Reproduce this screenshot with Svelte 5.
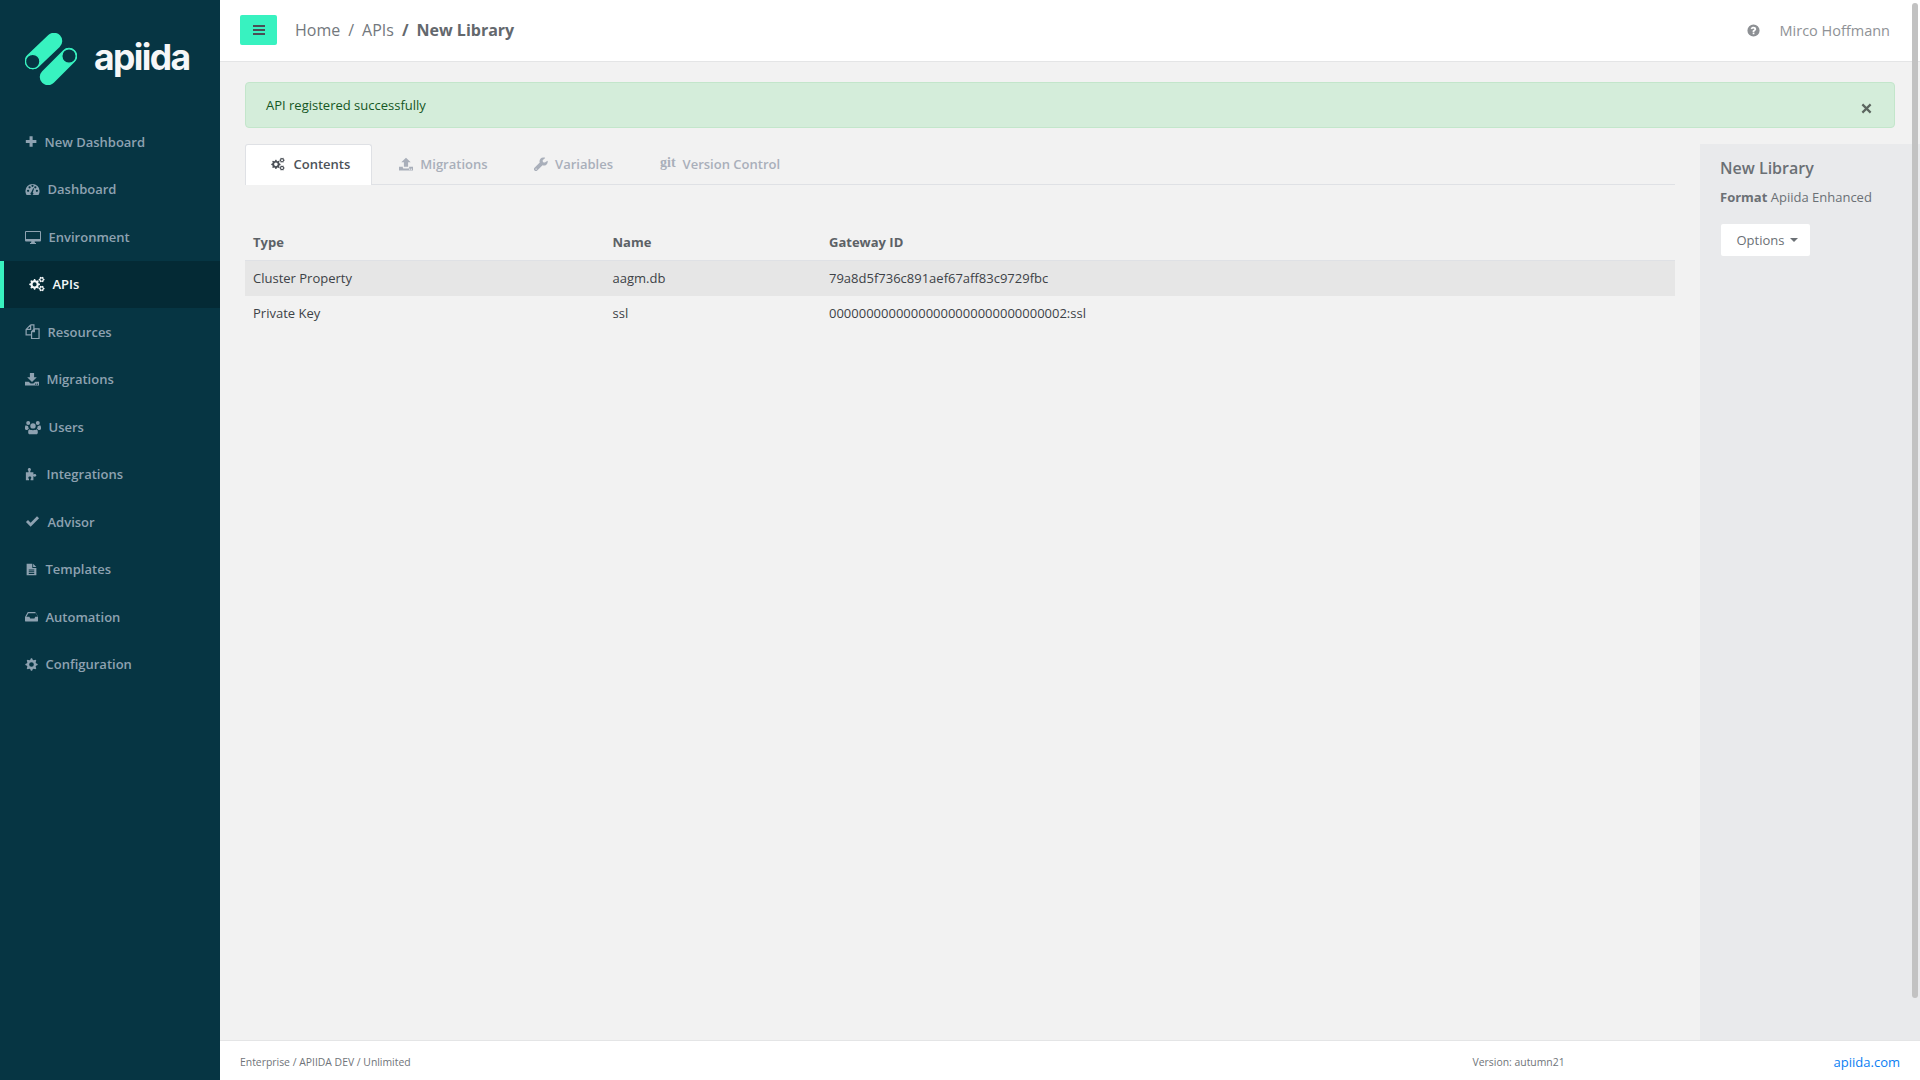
<script>
  function gear(cx, cy, r, teeth = 8) {
    const pts = [];
    const n = teeth * 4;
    for (let i = 0; i < n; i++) {
      const a = ((i - 0.5) / n) * Math.PI * 2;
      const rr = i % 4 === 0 || i % 4 === 1 ? r : r * 0.76;
      pts.push((cx + Math.cos(a) * rr).toFixed(2) + ' ' + (cy + Math.sin(a) * rr).toFixed(2));
    }
    const h = r * 0.38;
    return `M${pts.join('L')}Z M${cx - h} ${cy}a${h} ${h} 0 1 0 ${2 * h} 0a${h} ${h} 0 1 0 ${-2 * h} 0Z`;
  }
  const cogs = gear(5.6, 8.4, 5.4) + gear(12.6, 3.6, 3, 6) + gear(12.6, 12.6, 3, 6);
  const icons = {
    plus: 'M5.6 1.5h3.8v4.6H14v3.8H9.4v4.6H5.6V9.9H1V6.1h4.6z',
    dash: 'M8 2a7.6 7.6 0 0 0-7.6 7.6c0 1.5.4 3 1.2 4.2h12.8a7.6 7.6 0 0 0 1.2-4.2A7.6 7.6 0 0 0 8 2zM3.3 10.6a1.2 1.2 0 1 1 0-2.4 1.2 1.2 0 0 1 0 2.4zm1.6-3.7a1.2 1.2 0 1 1 0-2.4 1.2 1.2 0 0 1 0 2.4zM8 5.3a1.2 1.2 0 1 1 0-2.4 1.2 1.2 0 0 1 0 2.4zm1 7a1.6 1.6 0 1 1-2.3-1.4l2-4.3 1 .4-1.5 4.4c.5.2.8.5.8.9zm3.7-1.7a1.2 1.2 0 1 1 0-2.4 1.2 1.2 0 0 1 0 2.4zM11 6.9a1.2 1.2 0 1 1 0-2.4 1.2 1.2 0 0 1 0 2.4z',
    desktop: 'M1 2h14a1 1 0 0 1 1 1v8.5a1 1 0 0 1-1 1H9.6l.4 1.5h1v1H5v-1h1l.4-1.5H1a1 1 0 0 1-1-1V3a1 1 0 0 1 1-1zm0 1v7h14V3z',
    files: 'M6 1H9.5V6M6 1L1.2 5.8V11.6H6.5M6 1V5.8H1.2M10 5.2H15V15.5H7V8.2zM10 5.2V8.2H7',
    download: 'M5.6 1h4.8v5h3.1L8 11.4 2.5 6h3.1zM0 11h4.2l2.2 2.1h3.2L11.8 11H16v4.4H0zm12.2 2.2a.7.7 0 1 0 0 1.4.7.7 0 0 0 0-1.4zm2 0a.7.7 0 1 0 0 1.4.7.7 0 0 0 0-1.4z',
    users: 'M8 4.2a2.7 2.7 0 1 1 0 5.4 2.7 2.7 0 0 1 0-5.4zM3.2 2a2 2 0 1 1 0 4 2 2 0 0 1 0-4zm9.6 0a2 2 0 1 1 0 4 2 2 0 0 1 0-4zM4.2 10.3c.8.6 2 .9 3.8.9s3-.3 3.8-.9c.7.4 1 1.3 1 2.5v1c0 .9-.6 1.5-1.5 1.5H4.7c-.9 0-1.5-.6-1.5-1.5v-1c0-1.2.3-2.1 1-2.5zM0 8.3c0-1 .3-1.7.8-2.1.5.5 1.3.8 2.3.8-.1.9.2 1.9.9 2.6-.7.3-1.2.7-1.5 1.4H1.3C.5 11 0 10.5 0 9.8zm16 0v1.5c0 .7-.5 1.2-1.3 1.2h-1.4c-.3-.7-.8-1.1-1.5-1.4.7-.7 1-1.7.9-2.6 1 0 1.8-.3 2.3-.8.5.4 1 1.1 1 2.1z',
    puzzle: 'M1 6h3V4.4C3.5 4 3.2 3.5 3.2 3 3.2 2 4.1 1.2 5 1.2S6.8 2 6.8 3c0 .5-.3 1-.8 1.4V6h3.6v2.6c.4-.4.9-.7 1.5-.7 1 0 1.9.8 1.9 1.6s-.9 1.6-1.9 1.6c-.6 0-1.1-.3-1.5-.7V15H6.4v-1.3c.5-.3.8-.8.8-1.3 0-.9-.8-1.5-1.7-1.5s-1.7.6-1.7 1.5c0 .5.3 1 .8 1.3V15H1z',
    check: 'M6 13.6 1 8.6l2.2-2.2L6 9.2l6.8-6.8L15 4.6z',
    file: 'M2 1h7v5h5v9.2H2zm8 0 4 4h-4zM4.6 8v1.1h6.8V8zm0 2.2v1.1h6.8v-1.1zm0 2.2v1.1h6.8v-1.1z',
    inbox: 'M3.4 2.5h9.2L16 8.5v4.7c0 .6-.5 1.1-1.1 1.1H1.1c-.6 0-1.1-.5-1.1-1.1V8.5zm.8 1.4-2.5 4.5h3.7l1 2h5.2l1-2h3.7l-2.5-4.5z',
    upload: 'M8 .8 13.4 6h-3v5H5.6V6h-3zM0 11h4.4v.9c0 .7.5 1.2 1.2 1.2h4.8c.7 0 1.2-.5 1.2-1.2V11H16v4.4H0zm12.2 2.2a.7.7 0 1 0 0 1.4.7.7 0 0 0 0-1.4zm2 0a.7.7 0 1 0 0 1.4.7.7 0 0 0 0-1.4z',
    wrench: 'M15.4 4.2c.2.4.3.8.3 1.3a4.3 4.3 0 0 1-5.9 4L3.4 15.8a1.6 1.6 0 0 1-2.3 0l-.8-.8a1.6 1.6 0 0 1 0-2.3l6.3-6.3A4.3 4.3 0 0 1 11.6.7c.5 0 .9.1 1.2.3L9.9 3.7l.3 2.2 2.2.4zM2.4 13a.8.8 0 1 0 0 1.6.8.8 0 0 0 0-1.6z',
    cogs,
    cog: gear(8, 8, 7.6)
  };
  const nav = [
    { label: 'New Dashboard', icon: 'plus', w: 11, iw: 10 },
    { label: 'Dashboard', icon: 'dash', w: 13, iw: 13 },
    { label: 'Environment', icon: 'desktop', w: 14, iw: 14 },
    { label: 'APIs', icon: 'cogs', w: 14, iw: 14, active: true },
    { label: 'Resources', icon: 'files', w: 13, iw: 13, line: true },
    { label: 'Migrations', icon: 'download', w: 12, iw: 12 },
    { label: 'Users', icon: 'users', w: 14, iw: 14 },
    { label: 'Integrations', icon: 'puzzle', w: 12, iw: 12 },
    { label: 'Advisor', icon: 'check', w: 13, iw: 13 },
    { label: 'Templates', icon: 'file', w: 11, iw: 11 },
    { label: 'Automation', icon: 'inbox', w: 11, iw: 11 },
    { label: 'Configuration', icon: 'cog', w: 11, iw: 11 }
  ];
  const rows = [
    ['Cluster Property', 'aagm.db', '79a8d5f736c891aef67aff83c9729fbc'],
    ['Private Key', 'ssl', '00000000000000000000000000000002:ssl']
  ];
</script>

<div class="shell">
  <aside class="sidebar">
    <div class="brand">
      <svg class="mark" viewBox="25 33 52 52" aria-hidden="true">
        <path d="M33 61 54 41" stroke="#38f2c0" stroke-width="16.5" stroke-linecap="round" fill="none"/>
        <circle cx="32.7" cy="61.5" r="7.2" fill="#063543" stroke="#38f2c0" stroke-width="1.3"/>
        <path d="M69 56 48 77" stroke="#38f2c0" stroke-width="16.5" stroke-linecap="round" fill="none"/>
        <circle cx="69" cy="56" r="7.2" fill="#063543" stroke="#38f2c0" stroke-width="1.3"/>
      </svg>
      <span class="wordmark">apiida</span>
    </div>
    <nav class="nav">
      {#each nav as item}
        <a class="nav-item" class:active={item.active} class:line={item.line} href="#top">
          <span class="nav-icon" style="width:{item.iw}px">
            <svg viewBox="0 0 16 16" width={item.w + 2} height={item.w + 2} aria-hidden="true"><path d={icons[item.icon]} fill-rule="evenodd"/></svg>
          </span>
          <span>{item.label}</span>
        </a>
      {/each}
    </nav>
  </aside>

  <div class="page">
    <header class="topbar">
      <button class="toggle" aria-label="Toggle sidebar">
        <svg viewBox="0 0 12 10" width="12" height="10"><path d="M0 0h12v2H0zM0 4h12v2H0zM0 8h12v2H0z" fill="#4a4f55"/></svg>
      </button>
      <ol class="crumbs">
        <li>Home</li><li class="sep">/</li><li>APIs</li><li class="sep strong">/</li><li class="strong">New Library</li>
      </ol>
      <div class="user">
        <svg viewBox="0 0 16 16" width="13" height="13"><path fill-rule="evenodd" fill="#8d9094" d="M8 .5a7.5 7.5 0 1 1 0 15 7.5 7.5 0 0 1 0-15zM7 10.6v2h2.1v-2zM8.1 3.4c-1.7 0-2.9.8-3.6 2l1.5 1.1c.5-.6 1-1 1.8-1 .7 0 1.2.3 1.2.9 0 .5-.4.8-1 1.1-.9.4-1.1.9-1.1 1.8v.4h2.1c0-.5.2-.8.8-1.1.9-.5 1.5-1.1 1.5-2.4 0-1.8-1.6-2.8-3.2-2.8z"/></svg>
        <span>Mirco Hoffmann</span>
      </div>
    </header>

    <div class="body">
      <div class="alert">
        <span>API registered successfully</span>
        <svg class="close" viewBox="0 0 12 12" width="11" height="11"><path d="M1.5 1.5l9 9m0-9l-9 9" stroke="#5b665f" stroke-width="2.4" fill="none"/></svg>
      </div>

      <div class="workspace">
        <main class="content">
          <div class="tabs">
            <div class="tab current">
              <svg viewBox="0 0 16 16" width="14" height="14"><path d={icons.cogs} fill="#4b5057" fill-rule="evenodd"/></svg>
              <span>Contents</span>
            </div>
            <div class="tab mig">
              <svg viewBox="0 0 16 16" width="14" height="14"><path d={icons.upload} fill="#a9afba" fill-rule="evenodd"/></svg>
              <span>Migrations</span>
            </div>
            <div class="tab vars">
              <svg viewBox="0 0 16 16" width="14" height="14"><path d={icons.wrench} fill="#a9afba" fill-rule="evenodd"/></svg>
              <span>Variables</span>
            </div>
            <div class="tab vcs">
              <span class="git">git</span>
              <span>Version Control</span>
            </div>
          </div>

          <div class="table">
            <div class="tr head"><div>Type</div><div>Name</div><div>Gateway ID</div></div>
            {#each rows as row, i}
              <div class="tr" class:shade={i === 0}>
                {#each row as cell}<div>{cell}</div>{/each}
              </div>
            {/each}
          </div>
        </main>

        <aside class="panel">
          <h2>New Library</h2>
          <p><strong>Format</strong> Apiida Enhanced</p>
          <button class="options">Options <i class="caret"></i></button>
        </aside>
      </div>
    </div>

    <footer class="footer">
      <span class="small left">Enterprise / APIIDA DEV / Unlimited</span>
      <span class="small version">Version: autumn21</span>
      <a class="site" href="#top">apiida.com</a>
    </footer>
  </div>
  <div class="scrollbar"></div>
</div>

<style>
  :global(body) {
    margin: 0;
    font-family: "Open Sans", "Noto Sans", sans-serif;
    background: #f2f2f2;
    overflow: hidden;
  }
  * { box-sizing: border-box; }
  .shell { display: flex; height: 1080px; width: 1920px; position: relative; }
  .sidebar { width: 220px; flex: none; background: #063543; }
  .brand { display: flex; align-items: center; height: 118px; padding: 0 0 0 25px; gap: 17px; }
  .mark { width: 52px; height: 52px; flex: none; margin-top: 0; }
  .wordmark { font-family: Inter, sans-serif; font-weight: 700; font-size: 35.5px; letter-spacing: -1.6px; color: #f6f7f8; line-height: 1; margin-top: -2px; }
  .nav { display: flex; flex-direction: column; padding-top: 0; }
  .nav-item { display: flex; align-items: center; gap: 9.5px; height: 47.5px; padding-left: 25px; color: #8ea2b1; text-decoration: none; font-size: 13px; font-weight: 600; }
  .nav-icon { display: flex; align-items: center; flex: none; }
  .nav-icon svg { fill: #8ea2b1; flex: none; display: block; }
  .nav-item.line svg { fill: none; stroke: #8ea2b1; stroke-width: 1.3; }
  .nav-item.active { background: #042a35; color: #f4f6f7; border-left: 4px solid #38f2c0; padding-left: 25px; }
  .nav-item.active svg { fill: #f4f6f7; }
  .page { flex: 1; min-width: 0; display: flex; flex-direction: column; }
  .topbar { height: 62px; flex: none; background: #fff; border-bottom: 1px solid #e4e5e6; display: flex; align-items: center; padding: 0 30px 0 20px; }
  .toggle { width: 37px; height: 30px; border: 0; border-radius: 2px; background: #38f2c0; display: flex; align-items: center; justify-content: center; margin-top: -2px; padding: 0; }
  .crumbs { list-style: none; display: flex; margin: -1px 0 0 18px; padding: 0; font-size: 16px; color: #73787d; gap: 8px; }
  .crumbs .strong { font-weight: 700; color: #63686d; }
  .user { margin-left: auto; display: flex; align-items: center; gap: 20px; font-size: 14.5px; color: #8f9296; margin-right: 0; }
  .body { flex: 1; min-height: 0; display: flex; flex-direction: column; padding-top: 20px; }
  .alert { margin: 0 25px 0 25px; height: 46px; background: #d4edda; border: 1px solid #c3e6cb; border-radius: 4px; color: #155724; font-size: 13px; display: flex; align-items: center; justify-content: space-between; padding: 0 22px 0 20px; }
  .close { margin-top: 7px; }
  .workspace { flex: 1; min-height: 0; display: flex; margin-top: 16px; }
  .content { flex: 1; padding: 0 25px 0 25px; min-width: 0; }
  .tabs { display: flex; height: 41px; border-bottom: 1px solid #dfe1e5; }
  .tab { display: flex; align-items: center; height: 40px; font-size: 13px; font-weight: 600; color: #a9afba; }
  .tab.current { background: #fff; color: #4d5258; border: 1px solid #dfe1e5; border-bottom: 0; border-radius: 3px 3px 0 0; height: 41px; padding: 0 21px 2px 25px; gap: 8.5px; }
  .tab.mig { padding: 0 22.5px 0 26.5px; gap: 7.5px; }
  .tab.vars { padding: 0 23px 0 24px; gap: 7px; }
  .tab.vcs { padding: 0 24px; gap: 7px; }
  .git { font-family: "Liberation Serif", serif; font-size: 14px; font-weight: 700; margin-top: -3px; }
  .table { margin-top: 41px; font-size: 13px; color: #3d4247; }
  .tr { display: grid; grid-template-columns: 359.5px 216.5px 1fr; height: 35px; align-items: center; }
  .tr > div { padding: 0 0 2px 8px; }
  .tr.head { height: 35px; font-weight: 700; color: #5c6166; border-bottom: 1px solid #dfe1e5; }
  .tr.shade { background: #e6e6e6; }
  .panel { width: 220px; flex: none; background: #e9eaec; padding: 13px 20px; color: #6b7075; }
  h2 { margin: 0; font-size: 16px; font-weight: 600; line-height: 23px; color: #6b7075; }
  p { margin: 8px 0 0; font-size: 13px; line-height: 19px; }
  p strong { font-weight: 700; }
  .options { margin: 17px 0 0 1px; width: 89px; height: 32px; border: 0; border-radius: 2px; background: #fff; color: #6b7075; font: 400 13px "Open Sans", sans-serif; display: flex; align-items: center; justify-content: center; gap: 6px; padding: 0 0 0 4px; }
  .caret { width: 0; height: 0; border: 4px solid transparent; border-top-color: #6b7075; border-bottom: 0; }
  .footer { height: 40px; flex: none; background: #fff; border-top: 1px solid #e4e5e6; display: flex; align-items: center; padding: 2px 20px 0 20px; }
  .small { font-size: 10.4px; color: #6f7479; }
  .version { margin-left: auto; margin-right: 269px; }
  .site { color: #0a7ef3; font-size: 13px; text-decoration: none; }
  .scrollbar { position: absolute; top: 3px; right: 2px; width: 6px; height: 995px; border-radius: 3px; background: #c2c2c2; }
</style>
